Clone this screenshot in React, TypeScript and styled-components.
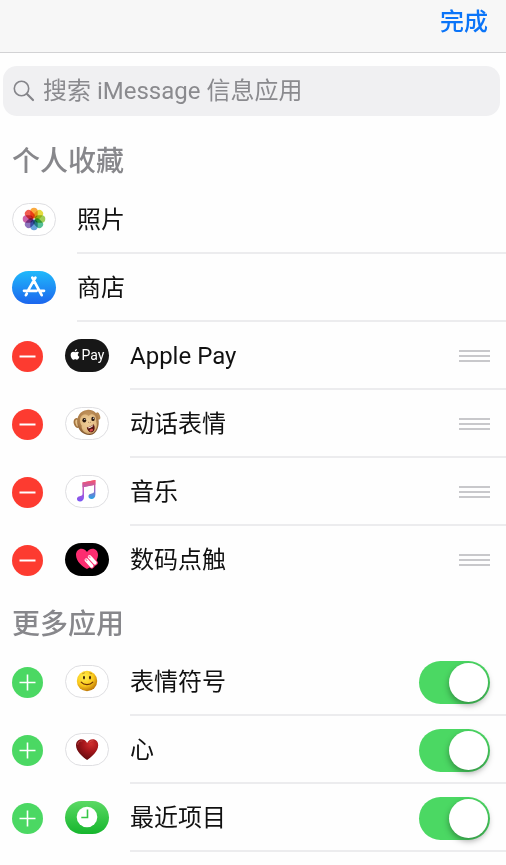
import React, { useId, useState } from "react";
import styled, { createGlobalStyle, css } from "styled-components";

const GlobalStyle = createGlobalStyle`
  * { box-sizing: border-box; }
  body {
    margin: 0;
    background: #fefefe;
    color: #111;
    font-family: Roboto, "Noto Sans CJK SC", sans-serif;
    font-size: 24px;
    line-height: 32px;
  }
  button, input { font: inherit; }
`;

const Header = styled.header`
  display: flex;
  justify-content: flex-end;
  align-items: flex-start;
  height: 53px;
  padding: 6px 18px 0;
  background: #f7f7f7;
  border-bottom: 1px solid #d2d2d4;
`;

const DoneButton = styled.button`
  border: 0;
  padding: 0;
  background: none;
  color: #0a74f8;
  font-weight: 500;
  line-height: 32px;
  cursor: pointer;
`;

const SearchField = styled.label`
  display: flex;
  align-items: center;
  gap: 8px;
  height: 50px;
  margin: 13px 6px 0 3px;
  padding: 0 10px;
  border-radius: 14px;
  background: #f0f0f2;
`;

const SearchInput = styled.input`
  flex: 1;
  min-width: 0;
  height: 40px;
  border: 0;
  padding: 0;
  outline: 0;
  background: none;
  color: #111;
  &::placeholder { color: #8a8a8e; opacity: 1; }
`;

const SectionTitle = styled.h2<{ $first?: boolean }>`
  margin: 0;
  padding: ${(p) => (p.$first ? "27px 12px 5px" : "12px 12px 4px")};
  color: #87878b;
  font-size: 28px;
  font-weight: 500;
  line-height: 38px;
`;

const List = styled.ul`
  margin: 0;
  padding: 0;
  list-style: none;
`;

const Row = styled.li`
  display: flex;
  align-items: center;
  height: 68px;
  padding-left: 12px;
`;

const RowContent = styled.div<{ $open?: boolean }>`
  display: flex;
  flex: 1;
  align-items: center;
  justify-content: space-between;
  align-self: stretch;
  margin-left: 21px;
  padding: 2px 16px 0 0;
  border-bottom: 2px solid #ececee;
  ${(p) => p.$open && css`${Row}:last-child > & { border-bottom-color: transparent; }`}
`;

const RoundButton = styled.button<{ $color: string }>`
  display: grid;
  place-items: center;
  width: 31px;
  height: 31px;
  margin: 0 22px 0 0;
  padding: 0;
  border: 0;
  border-radius: 50%;
  background: ${(p) => p.$color};
  cursor: pointer;
`;

const Pill = styled.span<{ $fill?: string }>`
  display: grid;
  place-items: center;
  width: 44px;
  height: 33px;
  margin-bottom: 2px;
  border-radius: 17px;
  overflow: hidden;
  ${(p) =>
    p.$fill
      ? css`background: ${p.$fill};`
      : css`background: #fff; border: 1px solid #dfdfe2;`}
`;

const PayMark = styled.span`
  display: flex;
  align-items: center;
  gap: 2px;
  color: #fff;
  font-size: 14px;
  line-height: 16px;
`;

const HandleButton = styled.button`
  display: grid;
  gap: 3px;
  width: 31px;
  padding: 0;
  border: 0;
  background: none;
  cursor: grab;
`;

const HandleBar = styled.span`
  height: 2px;
  background: #c8c8cb;
`;

const Switch = styled.input`
  appearance: none;
  display: flex;
  align-items: center;
  width: 71px;
  height: 43px;
  margin: 0;
  padding: 2px;
  border-radius: 22px;
  background: #e5e5ea;
  cursor: pointer;
  &::before {
    content: "";
    width: 39px;
    height: 39px;
    border-radius: 50%;
    background: #fff;
    box-shadow: 0 3px 6px rgba(0, 0, 0, 0.35);
  }
  &:checked { background: #4bd863; justify-content: flex-end; }
`;

const petals = ["#f99a1c", "#e0d51c", "#8fc43a", "#35b384", "#4b93d6", "#7a5cb0", "#c4489a", "#ee4030"];

const PhotosIcon = () => (
  <svg width="24" height="24" viewBox="-12 -12 24 24" aria-hidden="true">
    {petals.map((c, i) => (
      <rect key={c} x="-3.7" y="-11.3" width="7.4" height="10.6" rx="3.7" fill={c} fillOpacity="0.85"
        transform={`rotate(${i * 45})`} style={{ mixBlendMode: "multiply" }} />
    ))}
  </svg>
);

const StoreIcon = () => (
  <svg width="24" height="24" viewBox="0 0 24 24" fill="none" stroke="#fff" strokeWidth="2.7" strokeLinecap="round" aria-hidden="true">
    <path d="M13.4 2.600 6 15.600M10.300 2.600l9.400 17.600M2 15.800h12.600M18.600 15.800H22M4.800 18.600l-.9 1.600" />
  </svg>
);

const AppleGlyph = () => (
  <svg width="10" height="12" viewBox="0 0 18 24" fill="#fff" aria-hidden="true">
    <path d="M12.8 0c.2 2.6-1.900 4.900-4.200 4.900C8.300 2.500 10.500.2 12.800 0ZM16.900 7.500c-3.400 2-3.100 6.700.8 8.200-.8 2.400-2.600 5.800-4.500 5.800-1.400 0-1.900-.9-3.600-.9s-2.300.9-3.600.9C3.500 21.500.3 16.300.3 11.900c0-4.200 2.700-6.400 5.200-6.400 1.600 0 2.900 1 4 1 1 0 2.500-1.100 4.400-1.100 1.100 0 2.300.8 3 2.100Z" />
  </svg>
);

const MonkeyIcon = () => (
  <svg width="32" height="30" viewBox="0 0 32 30" aria-hidden="true">
    <defs>
      <radialGradient id="fur" cx=".5" cy=".3" r=".75">
        <stop offset="0" stopColor="#c99b63" /><stop offset=".65" stopColor="#ab7c48" /><stop offset="1" stopColor="#6e4825" />
      </radialGradient>
      <radialGradient id="face" cx=".5" cy=".4" r=".65">
        <stop offset="0" stopColor="#f0d09c" /><stop offset=".7" stopColor="#e2bb82" /><stop offset="1" stopColor="#c3935a" />
      </radialGradient>
    </defs>
    <ellipse cx="6" cy="15" rx="3.300" ry="5" fill="#a3743f" transform="rotate(-15 6 15)" />
    <ellipse cx="6.500" cy="15" rx="2" ry="3.500" fill="#e6c28b" transform="rotate(-15 6.500 15)" />
    <ellipse cx="27" cy="8" rx="2" ry="3.800" fill="#b98b55" transform="rotate(-18 27 8)" />
    <path d="M16 2C22 1 26.500 5 27.500 11c1.100 7-1.500 15.500-8.500 16-7 .3-12-5-12.700-11.500C5.500 8.500 9 3 16 2Z" fill="url(#fur)" />
    <path d="M10.500 8c2.500-2.300 5.200-1.600 7.300 0 1.700-2.500 5.700-2.500 6.900.9.700 2.300.3 4.100.9 6.100 1.200 5-1.500 10.500-6.600 10.800-5.500.3-9-4-8.300-8.300-2-2.500-2.500-7.200-.2-9.500Z" fill="url(#face)" />
    <ellipse cx="13.300" cy="12.300" rx="1.900" ry="2.300" fill="#26150d" />
    <ellipse cx="22" cy="10.900" rx="1.700" ry="2.200" fill="#26150d" />
    <circle cx="13.800" cy="11.500" r=".6" fill="#fff" /><circle cx="22.400" cy="10.200" r=".6" fill="#fff" />
    <path d="M17.300 14.200l.9.500M20 13.800l-.6.600" stroke="#8a6038" strokeWidth=".9" />
    <path d="M15.800 19.500c2.500-.2 4.700-1.400 6.600-3.200 1.800 1.600 2 6.800-1.400 7.900-2.800.7-4.700-2-5.200-4.700Z" fill="#55120f" />
    <path d="M17 19.500c2-.3 3.600-1.100 5-2.400l.3.900c-1.400 1.200-3 2-4.900 2.400Z" fill="#f7ebe0" />
    <ellipse cx="20.300" cy="22.200" rx="1.900" ry="1.200" fill="#d64e4c" transform="rotate(-25 20.300 22.200)" />
  </svg>
);

const MusicIcon = () => (
  <svg width="24" height="26" viewBox="0 0 24 26" aria-hidden="true">
    <defs>
      <linearGradient id="noteLeft" x1="0" y1="0" x2="0" y2="1"><stop offset="0" stopColor="#f4526e" /><stop offset=".55" stopColor="#b85bd0" /><stop offset="1" stopColor="#7656f6" /></linearGradient>
      <linearGradient id="noteRight" x1="0" y1="0" x2="0" y2="1"><stop offset="0" stopColor="#fb5268" /><stop offset=".5" stopColor="#a263c8" /><stop offset="1" stopColor="#24a5e5" /></linearGradient>
    </defs>
    <path d="M7.500 4.500 20.400 2v4.700L9 9v10c0 3-1.800 4.400-4 4.400-1.900 0-3-1-3-2.500 0-2.700 3.300-2.900 4.700-3.500.6-.3.800-.7.800-1.300Z" fill="url(#noteLeft)" />
    <path d="M7.500 4.500 20.400 2v14.600c0 3-1.600 4.400-3.900 4.400-1.800 0-3-1-3-2.500 0-2.700 3.200-2.800 4.600-3.400.6-.3.900-.7.900-1.300V7L7.500 9.300Z" fill="url(#noteRight)" />
  </svg>
);

const TouchIcon = () => (
  <svg width="26" height="24" viewBox="0 0 26 24" aria-hidden="true">
    <path d="M13 22C8.500 19.500 2 14.500 2 8 2 4.200 4.500 1.800 7.500 1.800c2.500 0 4.400 1.300 5.500 3.200 1.100-1.900 3-3.200 5.500-3.200 3.200 0 5.500 2.500 5.500 6.200C24 14.500 17.500 19.500 13 22Z" fill="#fc2d70" />
    <g strokeLinecap="round" fill="none">
      <path d="m15.500 9.800 5.500 6M12.500 12.800l5.300 6" stroke="#fc2d70" strokeWidth="5.500" />
      <path d="m15.500 9.800 5.500 6M12.300 13l5.400 6" stroke="#fff" strokeWidth="3.500" />
      <path d="m15 9.300.9.900M11.900 12.500l.9 1" stroke="#fc8aae" strokeWidth="1.500" />
    </g>
  </svg>
);

const SmileIcon = () => (
  <svg width="22" height="22" viewBox="0 0 22 22" aria-hidden="true">
    <defs><radialGradient id="smile" cx=".38" cy=".3" r=".72"><stop offset="0" stopColor="#fff04d" /><stop offset=".6" stopColor="#fac81c" /><stop offset="1" stopColor="#bd7606" /></radialGradient></defs>
    <circle cx="11" cy="11" r="10.200" fill="url(#smile)" />
    <ellipse cx="8" cy="7.600" rx=".95" ry="1.900" fill="#3a1c0b" /><ellipse cx="14" cy="7.600" rx=".95" ry="1.900" fill="#3a1c0b" />
    <path d="M5.200 12.200c2.900 3.200 8.700 3.200 11.600 0" stroke="#6d3206" strokeWidth="1.200" fill="none" strokeLinecap="round" />
    <path d="M6.700 3.600l1.800-.7M13.700 2.900l1.800.7" stroke="#a56a10" strokeWidth=".7" fill="none" strokeLinecap="round" />
  </svg>
);

const HeartIcon = () => (
  <svg width="24" height="23" viewBox="0 0 24 23" aria-hidden="true">
    <defs><radialGradient id="heart" cx=".68" cy=".22" r=".85"><stop offset="0" stopColor="#d02f2e" /><stop offset=".45" stopColor="#a3151a" /><stop offset="1" stopColor="#560a0d" /></radialGradient></defs>
    <path d="M12.100 22C7.500 18.500 1 13.500 1 7.200c0-3.600 2.400-6 5.500-6 2.600 0 4.700 1.400 5.600 3.700 1-2.300 3-3.700 5.700-3.700 3.200 0 5.400 2.400 5.400 6 0 6.300-6.500 11.300-11.100 14.800Z" fill="url(#heart)" />
    <path d="M2.700 6.500C3 4 4.700 2.700 7 2.900M14.200 4.500c1-1.500 2.500-2 4-1.700" stroke="#e06761" strokeWidth=".8" fill="none" strokeLinecap="round" opacity=".6" />
  </svg>
);

const ClockIcon = () => (
  <svg width="22" height="22" viewBox="0 0 22 22" aria-hidden="true">
    <circle cx="11" cy="11" r="10.300" fill="#fff" />
    <path d="M11.500 3.500v8H5.300" fill="none" stroke="#35c846" strokeWidth="1.600" />
  </svg>
);

const BadgeSign = ({ plus }: { plus?: boolean }) => (
  <svg width="17" height="17" viewBox="0 0 17 17" stroke="#fff" strokeWidth={plus ? 1.6 : 2} aria-hidden="true">
    <path d={plus ? "M.5 8.500h16M8.500.5v16" : "M.5 8.500h16"} />
  </svg>
);

type AppItem = { name: string; icon: React.ReactNode; fill?: string };

const pinned: AppItem[] = [
  { name: "照片", icon: <PhotosIcon /> },
  { name: "商店", icon: <StoreIcon />, fill: "linear-gradient(#20b9fb, #1c66ee)" },
];

const favorites: AppItem[] = [
  { name: "Apple Pay", icon: <PayMark><AppleGlyph />Pay</PayMark>, fill: "#171717" },
  { name: "动话表情", icon: <MonkeyIcon /> },
  { name: "音乐", icon: <MusicIcon /> },
  { name: "数码点触", icon: <TouchIcon />, fill: "#000" },
];

const more: AppItem[] = [
  { name: "表情符号", icon: <SmileIcon /> },
  { name: "心", icon: <HeartIcon /> },
  { name: "最近项目", icon: <ClockIcon />, fill: "linear-gradient(#5bd964, #16b62d)" },
];

const MoreRow = ({ item }: { item: AppItem }) => {
  const id = useId();
  const [on, setOn] = useState(true);
  return (
    <Row>
      <RoundButton type="button" $color="#4bd863" aria-label={`添加${item.name}`}><BadgeSign plus /></RoundButton>
      <Pill $fill={item.fill}>{item.icon}</Pill>
      <RowContent>
        <label htmlFor={id}>{item.name}</label>
        <Switch id={id} type="checkbox" role="switch" checked={on} onChange={(e) => setOn(e.target.checked)} />
      </RowContent>
    </Row>
  );
};

export default function App() {
  return (
    <>
      <GlobalStyle />
      <Header><DoneButton type="button">完成</DoneButton></Header>
      <main>
        <SearchField>
          <svg width="22" height="22" viewBox="0 0 22 22" fill="none" stroke="#85858a" strokeLinecap="round" aria-hidden="true">
            <circle cx="8.500" cy="8.500" r="7.200" strokeWidth="1.600" />
            <path d="m14 14 6 6" strokeWidth="2.200" />
          </svg>
          <SearchInput type="search" placeholder="搜索 iMessage 信息应用" aria-label="搜索 iMessage 信息应用" />
        </SearchField>
        <SectionTitle $first>个人收藏</SectionTitle>
        <List>
          {pinned.map((item) => (
            <Row key={item.name}>
              <Pill $fill={item.fill}>{item.icon}</Pill>
              <RowContent>{item.name}</RowContent>
            </Row>
          ))}
          {favorites.map((item) => (
            <Row key={item.name}>
              <RoundButton type="button" $color="#fd3b30" aria-label={`移除${item.name}`}><BadgeSign /></RoundButton>
              <Pill $fill={item.fill}>{item.icon}</Pill>
              <RowContent $open>
                {item.name}
                <HandleButton type="button" aria-label={`移动${item.name}`}>
                  <HandleBar /><HandleBar /><HandleBar />
                </HandleButton>
              </RowContent>
            </Row>
          ))}
        </List>
        <SectionTitle>更多应用</SectionTitle>
        <List>{more.map((item) => <MoreRow key={item.name} item={item} />)}</List>
      </main>
    </>
  );
}
